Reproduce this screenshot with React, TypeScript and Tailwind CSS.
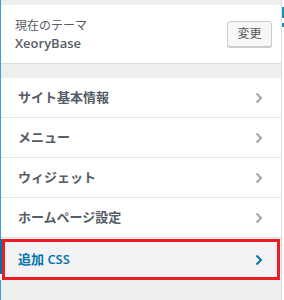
import React from 'react'

const jp = { fontFamily: '"Open Sans", "Noto Sans CJK JP", sans-serif' }

const Chevron = ({ active }: { active?: boolean }) => (
    <svg width="8" height="12" viewBox="0 0 8 12" className="shrink-0">
        <path d="M1.5 1.5 L6 6 L1.5 10.5" fill="none" stroke={active ? '#0073aa' : '#a0a5aa'} strokeWidth="2" />
    </svg>
)

const items = ['サイト基本情報', 'メニュー', 'ウィジェット', 'ホームページ設定']

const App = () => {
    return (
        <div className="w-[284px] h-[300px] flex bg-[#eeeeee] overflow-hidden" style={jp}>
            {/* left edge line */}
            <div className="w-px shrink-0 bg-[#3d9ddb]" />

            {/* panel */}
            <div className="w-[280px] shrink-0 flex flex-col pt-[5px]">
                {/* current theme */}
                <div className="h-[59px] shrink-0 bg-white border-b border-[#dddddd] flex items-center pl-[14px] pr-[9px]">
                    <div className="flex-1 flex flex-col pt-[1px]">
                        <span className="text-[12px] leading-[16px] text-[#555d66]">現在のテーマ</span>
                        <span className="text-[13px] leading-[18px] font-semibold text-[#555d66]">XeoryBase</span>
                    </div>
                    <button className="w-[45px] h-[26px] rounded-[3px] border border-[#cccccc] bg-[#f7f7f7] text-[12px] text-[#555555] shadow-[0_1px_0_#cccccc]">
                        変更
                    </button>
                </div>

                <div className="h-[14px] shrink-0" />

                {/* sections */}
                {items.map(label => (
                    <div key={label} className="h-[40px] shrink-0 bg-white border-b border-[#e5e5e5] flex items-center pl-[17px] pr-[18px]">
                        <span className="flex-1 text-[13px] font-semibold text-[#555d66]">{label}</span>
                        <Chevron />
                    </div>
                ))}

                <div className="h-[1px] shrink-0" />

                {/* active section */}
                <div className="relative h-[41px] shrink-0 bg-[#f3f3f5] flex items-center pl-[17px] pr-[18px] -ml-px">
                    <div className="absolute left-0 top-0 bottom-[6px] w-[4px] bg-[#0073aa]" />
                    <span className="flex-1 text-[13px] font-semibold text-[#0073aa] pl-px">追加 CSS</span>
                    <Chevron active />
                    <div className="absolute left-[2px] right-[1px] top-0 bottom-0 border-[3px] border-[#ed1c24]" />
                </div>
            </div>

            {/* right edge */}
            <div className="w-px shrink-0 bg-[#dddddd]" />
            <div className="flex-1 bg-white flex flex-col pt-[7px] gap-[5px]">
                <div className="h-[11px] bg-[#1e8cbe]" />
                <div className="h-[4px] bg-[#1e8cbe]" />
            </div>
        </div>
    )
}

export default App
